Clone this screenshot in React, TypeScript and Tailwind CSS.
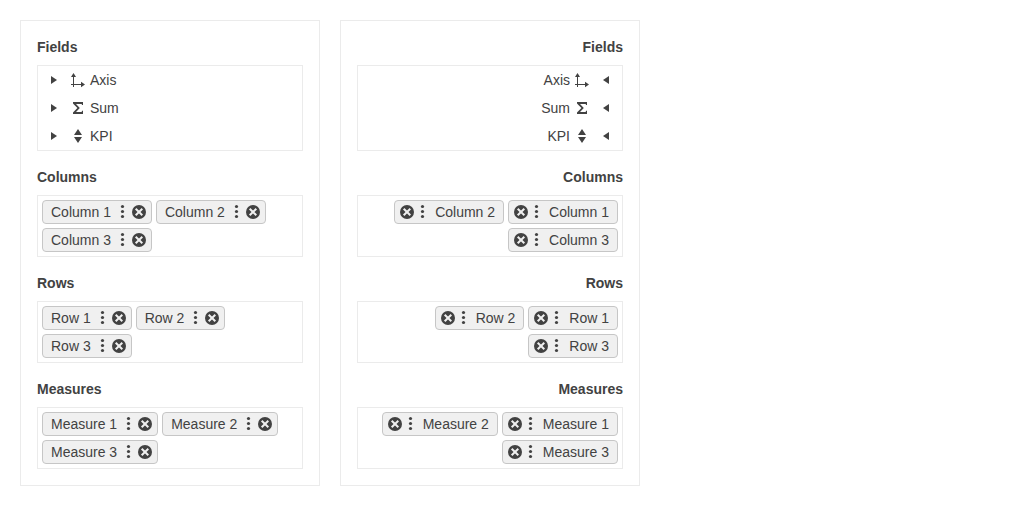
import type { ReactNode } from 'react';

type Direction = 'ltr' | 'rtl';

function Icon({ children, className = '' }: { children: ReactNode; className?: string }) {
  return (
    <svg viewBox="0 0 16 16" className={`block size-4 shrink-0 fill-current ${className}`} aria-hidden="true">
      {children}
    </svg>
  );
}

const AxisIcon = () => (
  <Icon>
    <path d="M3 5H1l2.5-4L6 5H4v7h7v-2.2l4 2.7-4 2.7V13H4v2H3v-2H1v-1h2z" />
  </Icon>
);

const SumIcon = () => (
  <Icon>
    <path d="M3 2h10v3h-1c0-.8-.3-1-1-1H6l3.8 4L6 12h5c.7 0 1-.4 1-1.2h1V14H3v-1.4L7.4 8 3 3.4z" />
  </Icon>
);

const KpiIcon = () => (
  <Icon>
    <path d="M8 1l4 6H4zM8 15l4-6H4z" />
  </Icon>
);

const MoreIcon = () => (
  <Icon>
    <circle cx="7.5" cy="2.5" r="1.6" />
    <circle cx="7.5" cy="7.5" r="1.6" />
    <circle cx="7.5" cy="12.5" r="1.6" />
  </Icon>
);

const RemoveIcon = () => (
  <Icon>
    <circle cx="8" cy="8" r="7" />
    <path d="M4.7 4.7l6.6 6.6M11.3 4.7l-6.6 6.6" fill="none" stroke="#f0f0f0" strokeWidth="2" />
  </Icon>
);

const fields = [
  { label: 'Axis', icon: <AxisIcon /> },
  { label: 'Sum', icon: <SumIcon /> },
  { label: 'KPI', icon: <KpiIcon /> },
];

const groups = [
  { title: 'Columns', items: ['Column 1', 'Column 2', 'Column 3'] },
  { title: 'Rows', items: ['Row 1', 'Row 2', 'Row 3'] },
  { title: 'Measures', items: ['Measure 1', 'Measure 2', 'Measure 3'] },
];

function Section({ title, children }: { title: string; children: ReactNode }) {
  return (
    <section className="flex flex-col gap-2">
      <h2 className="font-bold">{title}</h2>
      <div className="border border-[#ebebeb]">{children}</div>
    </section>
  );
}

function Chip({ label }: { label: string }) {
  return (
    <li className="flex h-6 items-center rounded border border-[#c6c6c6] bg-[#f0f0f0] ps-2 pe-1">
      <span className="me-1">{label}</span>
      <button type="button" aria-label={`${label} options`}>
        <MoreIcon />
      </button>
      <button type="button" aria-label={`Remove ${label}`}>
        <RemoveIcon />
      </button>
    </li>
  );
}

function Configurator({ dir }: { dir: Direction }) {
  return (
    <div dir={dir} className="flex w-[300px] flex-col gap-4 border border-[#ebebeb] p-4">
      <Section title="Fields">
        <ul>
          {fields.map(({ label, icon }) => (
            <li key={label} className="flex items-center px-2 py-1">
              <button type="button" aria-label={`Expand ${label}`} className="me-2">
                <Icon className="rtl:-scale-x-100">
                  <path d="M5 4l6 4-6 4z" />
                </Icon>
              </button>
              {icon}
              <span className="ms-1">{label}</span>
            </li>
          ))}
        </ul>
      </Section>
      {groups.map(({ title, items }) => (
        <Section key={title} title={title}>
          <ul className="flex flex-wrap gap-1 p-1">
            {items.map((item) => (
              <Chip key={item} label={item} />
            ))}
          </ul>
        </Section>
      ))}
    </div>
  );
}

export default function App() {
  return (
    <main className="flex flex-wrap items-start gap-5 bg-white p-5 font-['Liberation_Sans',Arial,sans-serif] text-sm text-[#424242]">
      <Configurator dir="ltr" />
      <Configurator dir="rtl" />
    </main>
  );
}
